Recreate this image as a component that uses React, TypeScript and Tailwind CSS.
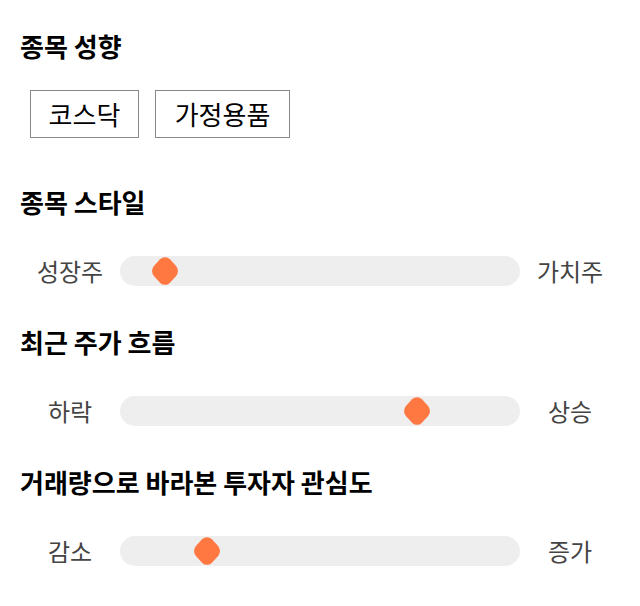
import React from "react";

const font = { fontFamily: '"Noto Sans CJK KR", "Noto Sans", sans-serif' };

function Thumb({ left }: { left: number }) {
  return (
    <svg
      className="absolute top-0"
      style={{ left: left - 14 }}
      width="28"
      height="30"
      viewBox="0 0 30 30"
      preserveAspectRatio="none"
    >
      <rect x="3" y="3" width="24" height="24" rx="7.5" transform="rotate(45 15 15)" fill="#ff7842" />
    </svg>
  );
}

function Slider({ left, right, pos }: { left: string; right: string; pos: number }) {
  return (
    <div className="flex items-center">
      <div className="w-[100px] text-center text-[24px] leading-[30px] text-[#444444]">{left}</div>
      <div className="relative h-[30px] flex-1 rounded-full bg-[#eeeeee]">
        <Thumb left={pos} />
      </div>
      <div className="w-[100px] text-center text-[24px] leading-[30px] text-[#444444]">{right}</div>
    </div>
  );
}

export default function App() {
  return (
    <div className="w-[640px] bg-white px-[20px] pt-[28px] text-black" style={font}>
      <h2 className="text-[26px] font-bold leading-[36px]">종목 성향</h2>
      <div className="mt-[26px] flex gap-[16px] pl-[10px]">
        <div className="w-[109px] border border-[#888888] pt-[6px] pb-[7px] text-center text-[26px] leading-[33px]">코스닥</div>
        <div className="w-[135px] border border-[#888888] pt-[6px] pb-[7px] text-center text-[26px] leading-[33px]">가정용품</div>
      </div>
      <h2 className="mt-[46px] text-[26px] font-bold leading-[36px]">종목 스타일</h2>
      <div className="mt-[36px]">
        <Slider left="성장주" right="가치주" pos={45} />
      </div>
      <h2 className="mt-[38px] text-[26px] font-bold leading-[36px]">최근 주가 흐름</h2>
      <div className="mt-[36px]">
        <Slider left="하락" right="상승" pos={297} />
      </div>
      <h2 className="mt-[38px] text-[26px] font-bold leading-[36px]">거래량으로 바라본 투자자 관심도</h2>
      <div className="mt-[36px] pb-[40px]">
        <Slider left="감소" right="증가" pos={87} />
      </div>
    </div>
  );
}
